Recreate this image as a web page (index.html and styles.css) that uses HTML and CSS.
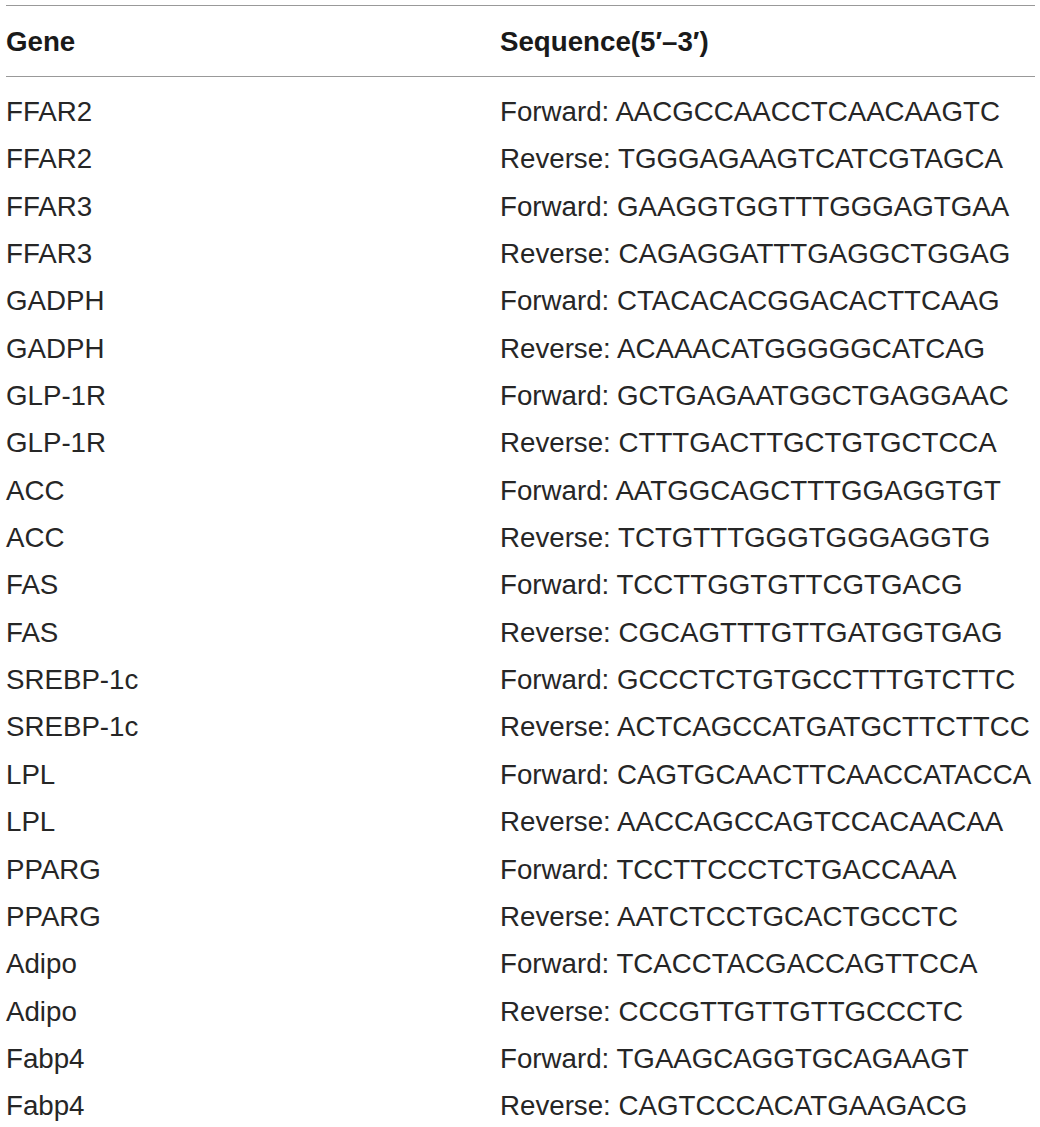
FILE: index.html
```html
<!DOCTYPE html>
<html>
<head>
<meta charset="utf-8">
<link rel="stylesheet" href="styles.css">
</head>
<body>
<table class="primers">
  <thead>
    <tr><th class="gene">Gene</th><th class="seq">Sequence(5′–3′)</th></tr>
  </thead>
  <tbody>
    <tr><td>FFAR2</td><td>Forward: AACGCCAACCTCAACAAGTC</td></tr>
    <tr><td>FFAR2</td><td>Reverse: TGGGAGAAGTCATCGTAGCA</td></tr>
    <tr><td>FFAR3</td><td>Forward: GAAGGTGGTTTGGGAGTGAA</td></tr>
    <tr><td>FFAR3</td><td>Reverse: CAGAGGATTTGAGGCTGGAG</td></tr>
    <tr><td>GADPH</td><td>Forward: CTACACACGGACACTTCAAG</td></tr>
    <tr><td>GADPH</td><td>Reverse: ACAAACATGGGGGCATCAG</td></tr>
    <tr><td>GLP-1R</td><td>Forward: GCTGAGAATGGCTGAGGAAC</td></tr>
    <tr><td>GLP-1R</td><td>Reverse: CTTTGACTTGCTGTGCTCCA</td></tr>
    <tr><td>ACC</td><td>Forward: AATGGCAGCTTTGGAGGTGT</td></tr>
    <tr><td>ACC</td><td>Reverse: TCTGTTTGGGTGGGAGGTG</td></tr>
    <tr><td>FAS</td><td>Forward: TCCTTGGTGTTCGTGACG</td></tr>
    <tr><td>FAS</td><td>Reverse: CGCAGTTTGTTGATGGTGAG</td></tr>
    <tr><td>SREBP-1c</td><td>Forward: GCCCTCTGTGCCTTTGTCTTC</td></tr>
    <tr><td>SREBP-1c</td><td>Reverse: ACTCAGCCATGATGCTTCTTCC</td></tr>
    <tr><td>LPL</td><td>Forward: CAGTGCAACTTCAACCATACCA</td></tr>
    <tr><td>LPL</td><td>Reverse: AACCAGCCAGTCCACAACAA</td></tr>
    <tr><td>PPARG</td><td>Forward: TCCTTCCCTCTGACCAAA</td></tr>
    <tr><td>PPARG</td><td>Reverse: AATCTCCTGCACTGCCTC</td></tr>
    <tr><td>Adipo</td><td>Forward: TCACCTACGACCAGTTCCA</td></tr>
    <tr><td>Adipo</td><td>Reverse: CCCGTTGTTGTTGCCCTC</td></tr>
    <tr><td>Fabp4</td><td>Forward: TGAAGCAGGTGCAGAAGT</td></tr>
    <tr><td>Fabp4</td><td>Reverse: CAGTCCCACATGAAGACG</td></tr>
  </tbody>
</table>
</body>
</html>
```
FILE: styles.css
```css
html, body {
  margin: 0;
  padding: 0;
  background: #ffffff;
}
body {
  padding: 5px 5px 0 6px;
  font-family: "Liberation Sans", Arial, sans-serif;
  font-size: 27.7px;
  color: #262626;
}
.primers {
  width: 1029px;
  border-collapse: collapse;
  border-top: 1px solid #999999;
}
.primers th {
  text-align: left;
  font-weight: bold;
  color: #1a1a1a;
  line-height: 47px;
  padding: 12px 0 11px 0;
  border-bottom: 1px solid #999999;
}
.primers td {
  line-height: 47.35px;
  padding: 0;
  white-space: nowrap;
}
.primers tbody tr:first-child td {
  padding-top: 11px;
}
.primers .gene {
  width: 494px;
}
.primers th, .primers td {
  vertical-align: top;
}
```
